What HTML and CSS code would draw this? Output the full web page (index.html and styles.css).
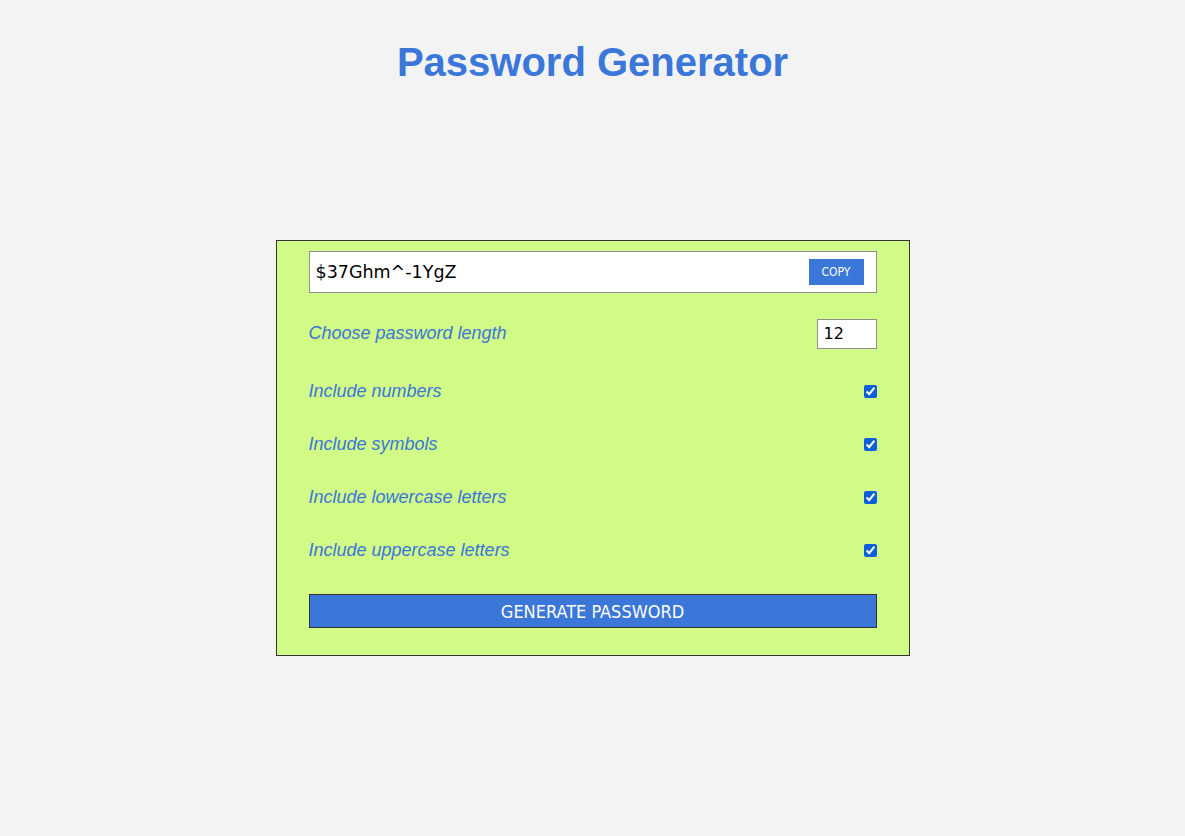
FILE: index.html
```html
<!DOCTYPE html>
<html>
<head>
<meta charset="utf-8">
<title>Password Generator</title>
<link rel="stylesheet" href="styles.css">
</head>
<body>
<h1 class="title">Password Generator</h1>
<div class="card">
  <div class="result">
    <span class="result-text">$37Ghm^-1YgZ</span>
    <button class="copy-btn">COPY</button>
  </div>
  <div class="row row-length">
    <label class="label">Choose password length</label>
    <input class="num" type="number" value="12">
  </div>
  <div class="row">
    <label class="label">Include numbers</label>
    <input class="check" type="checkbox" checked>
  </div>
  <div class="row">
    <label class="label">Include symbols</label>
    <input class="check" type="checkbox" checked>
  </div>
  <div class="row">
    <label class="label">Include lowercase letters</label>
    <input class="check" type="checkbox" checked>
  </div>
  <div class="row">
    <label class="label">Include uppercase letters</label>
    <input class="check" type="checkbox" checked>
  </div>
  <button class="generate">GENERATE PASSWORD</button>
</div>
</body>
</html>
```

FILE: styles.css
```css
html, body {
  margin: 0;
  padding: 0;
}
body {
  background: #f3f3f3;
  font-family: "Liberation Sans", Arial, sans-serif;
  min-height: 836px;
}
.title {
  margin: 0;
  padding-top: 39px;
  text-align: center;
  font-size: 40px;
  line-height: 46px;
  font-weight: bold;
  color: #3b76d9;
}
.card {
  box-sizing: border-box;
  width: 634px;
  margin: 155px auto 0;
  background: #d1fa87;
  border: 1px solid #333;
  padding: 10px 32px 27px;
  display: flex;
  flex-direction: column;
}
.result {
  box-sizing: border-box;
  height: 42px;
  background: #fff;
  border: 1px solid #8f8f8f;
  display: flex;
  align-items: center;
  justify-content: space-between;
  padding: 0 12px 0 6px;
}
.result-text {
  font-family: "DejaVu Sans", sans-serif;
  font-size: 17.5px;
  color: #000;
}
.copy-btn {
  width: 55px;
  height: 26px;
  border: none;
  background: #3b76d9;
  color: #fff;
  font-family: "DejaVu Sans Condensed", "DejaVu Sans", sans-serif;
  font-size: 12px;
  padding: 0;
}
.row {
  display: flex;
  align-items: center;
  justify-content: space-between;
  height: 53px;
}
.row-length {
  margin-top: 9px;
  height: 63px;
}
.label {
  font-style: italic;
  font-size: 18px;
  color: #3b76d9;
}
.num {
  box-sizing: border-box;
  width: 60px;
  height: 30px;
  border: 1px solid #8f8f8f;
  font-family: "DejaVu Sans", sans-serif;
  font-size: 16px;
  padding: 0 6px;
  margin: 0;
  background: #fff;
}
.check {
  width: 13px;
  height: 13px;
  margin: 0;
  accent-color: #0b5fdc;
}
.generate {
  margin-top: 17px;
  height: 34px;
  border: 1px solid #333;
  background: #3b76d9;
  color: #fff;
  font-family: "DejaVu Sans Condensed", "DejaVu Sans", sans-serif;
  font-size: 18px;
  padding: 0;
}
```
